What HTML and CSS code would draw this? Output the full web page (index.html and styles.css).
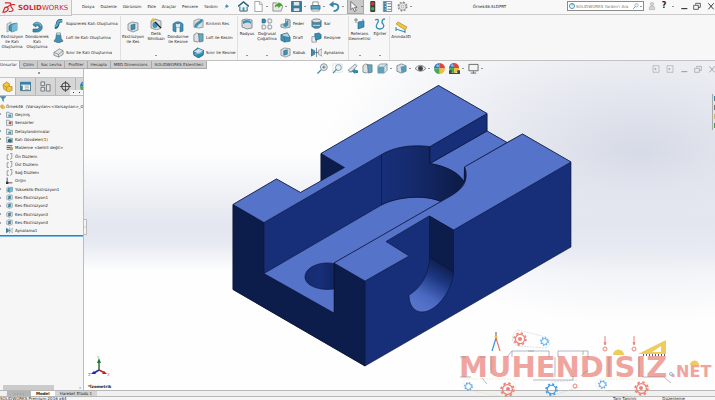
FILE: index.html
```html
<!DOCTYPE html>
<html lang="tr">
<head>
<meta charset="utf-8">
<title>SOLIDWORKS - Örnek46.SLDPRT</title>
<link rel="stylesheet" href="styles.css">
</head>
<body>
<svg class="defs" aria-hidden="true">
  <symbol id="i-extrude" viewBox="0 0 12 12"><path d="M1 3 5 1v8L1 11z" fill="#d9dcde" stroke="#78848c" stroke-width=".6"/><path d="M3 5 6 3l5-1v7l-5 2-3-2z" fill="#4595b8" stroke="#245c78" stroke-width=".6"/><path d="M6 4v7l5-2V2z" fill="#79bad4"/></symbol>
  <symbol id="i-revolve" viewBox="0 0 12 12"><path d="M2 4C3 1 7 0 10 3c3 4 0 8-4 8H2V8h4c2 0 3-2 1-3-1-1-2 0-2 1z" fill="#3e8fb4" stroke="#205873" stroke-width=".6"/><path d="M4 3c2-2 5-1 6 2" fill="none" stroke="#8cc8de"/></symbol>
  <symbol id="i-sweep" viewBox="0 0 12 12"><path d="M2 10c5 0 1-7 6-7h2" fill="none" stroke="#245f7d" stroke-width="4"/><path d="M2 9c5 0 1-6 6-6h2" fill="none" stroke="#59a8c8" stroke-width="2"/></symbol>
  <symbol id="i-loft" viewBox="0 0 12 12"><path d="M4 1h4l1 6 2 3-5 2-5-2 2-3z" fill="#4590b0" stroke="#355c6e" stroke-width=".6"/><path d="M4 1h4v2H4z" fill="#b6d7e2"/></symbol>
  <symbol id="i-box" viewBox="0 0 12 12"><path d="m1 6 6-4 4 2v4l-5 3-5-2z" fill="#e1e2e2" stroke="#737b80" stroke-width=".8"/><path d="m1 6 5 2 5-4M6 8v3" fill="none" stroke="#737b80" stroke-width=".7"/></symbol>
  <symbol id="i-cut" viewBox="0 0 12 12"><path d="m1 3 4-2 6 1v7l-5 2-5-2z" fill="#dcdfe1" stroke="#6f7980" stroke-width=".7"/><path d="m4 4 4-1v5L4 9z" fill="#3e91b5" stroke="#215a75" stroke-width=".5"/></symbol>
  <symbol id="i-hole" viewBox="0 0 12 12"><path d="m1 3 4-2 6 2v7l-4 2-6-2z" fill="#d5dadd" stroke="#6f7980" stroke-width=".7"/><ellipse cx="5" cy="7" rx="2.500" ry="3" fill="#3e91b5"/><path d="m5 4 6 6" stroke="#222" stroke-width="1.200"/><path d="M3 0v4M1 2h4" stroke="#f4b332" stroke-width="1.200"/></symbol>
  <symbol id="i-revcut" viewBox="0 0 12 12"><path d="M1 3c3-3 7-3 10 0v7l-3 1V6H4v5l-3-1z" fill="#4392b4" stroke="#276078" stroke-width=".6"/><path d="M4 3v3h4V3" fill="#d8e4e9"/></symbol>
  <symbol id="i-swcut" viewBox="0 0 12 12"><path d="M1 3 6 1l5 1v8l-5 1-5-1z" fill="#dadddf" stroke="#6f7980" stroke-width=".7"/><path d="M3 10c0-5 3-3 7-8" fill="none" stroke="#3d8fb3" stroke-width="3"/></symbol>
  <symbol id="i-bndcut" viewBox="0 0 12 12"><path d="m0 5 5-4 7 3-1 5-5 3-5-3z" fill="#2f8ab2" stroke="#205873" stroke-width=".7"/><path d="m1 5 5-3 5 2-5 3z" fill="#cfe2ea"/><path d="m2 8 8-2" stroke="#8cc8de"/></symbol>
  <symbol id="i-fillet" viewBox="0 0 12 12"><path d="m1 2 4-1 6 1v8l-5 1-5-2z" fill="#d6dadd" stroke="#606b72" stroke-width=".7"/><path d="M2 3c4-2 7-1 8 1v2C8 4 5 4 2 6z" fill="#3e91b5"/></symbol>
  <symbol id="i-pattern" viewBox="0 0 12 12"><path d="M1 1h3l1 2-1 2H1z" fill="#318db5" stroke="#205873" stroke-width=".5"/><path d="M7 1h3l1 2-1 2H7zM1 7h3l1 2-1 2H1zM7 7h3l1 2-1 2H7z" fill="#edf0f1" stroke="#707c83" stroke-width=".7"/></symbol>
  <symbol id="i-rib" viewBox="0 0 12 12"><path d="m1 7 5-1V1l5 1v8l-5 1-5-1z" fill="#c9d0d3" stroke="#63717a" stroke-width=".7"/><path d="m3 8 6-6v6l-3 2z" fill="#3f91b4"/></symbol>
  <symbol id="i-draft" viewBox="0 0 12 12"><path d="m1 3 7-2 3 5v4l-6 1-4-2z" fill="#3c93b9" stroke="#276077" stroke-width=".7"/><path d="m1 3 4 2 6 1-3-5zM5 5v6" fill="#b7d7e3" stroke="#276077" stroke-width=".5"/></symbol>
  <symbol id="i-wrap" viewBox="0 0 12 12"><path d="M1 3v6c2 3 8 3 10 0V3z" fill="#458cab" stroke="#5b6c75" stroke-width=".8"/><ellipse cx="6" cy="3" rx="5" ry="2" fill="#dce1e3" stroke="#5b6c75" stroke-width=".8"/><path d="M2 8h8" stroke="#d1e2e8"/></symbol>
  <symbol id="i-intersect" viewBox="0 0 12 12"><path d="M1 5h5v6H1z" fill="#eef0f1" stroke="#6f7980" stroke-width=".7"/><path d="m4 2 5-1 2 2v4L5 9z" fill="#368eb4" stroke="#225b75" stroke-width=".7"/></symbol>
  <symbol id="i-mirror" viewBox="0 0 12 12"><path d="m0 2 4 2v4l-4 2z" fill="#358fb6" stroke="#225b75" stroke-width=".6"/><path d="m12 2-4 2v4l4 2z" fill="#e2e5e7" stroke="#69767e" stroke-width=".6"/><path d="M6 1v10M4 6h4" stroke="#445660" stroke-width=".7"/></symbol>
  <symbol id="i-refgeo" viewBox="0 0 12 12"><path d="m4 4 6-1v6l-6 2z" fill="#3a91b7" stroke="#265e77" stroke-width=".6"/><path d="M2 0v5M0 2h4M9 1v2" stroke="#607078" stroke-width=".8"/></symbol>
  <symbol id="i-curve" viewBox="0 0 12 12"><path d="M1 2c4-2 4 1 2 4s0 5 3 5 5-3 3-5-1-5 2-5" fill="none" stroke="#2e8db6" stroke-width="1.300"/></symbol>
  <symbol id="i-instant" viewBox="0 0 12 12"><path d="m1 3 2-2 9 5-2 3z" fill="#f4c542" stroke="#a07c1b" stroke-width=".6"/><path d="m1 8 9 3M1 6v4M10 9v3" stroke="#3990b4" stroke-width="1.100"/></symbol>
  <symbol id="i-home" viewBox="0 0 12 12"><path d="M2 6v5h8V6" fill="#e7eef1" stroke="#316177"/><path d="m0 6 6-5 6 5" fill="none" stroke="#24617e" stroke-width="1.500"/><path d="M5 7h2v4H5z" fill="#3d8fb4"/></symbol>
  <symbol id="i-new" viewBox="0 0 12 12"><path d="M2 .5h5.500L10 3v8.500H2z" fill="#fff" stroke="#8a8a8a" stroke-width=".8"/><path d="M7 1v3h3" fill="#ddd" stroke="#8a8a8a" stroke-width=".6"/></symbol>
  <symbol id="i-open" viewBox="0 0 12 12"><path d="M1 11V2h4l1 1h4v2l2 0-2 6z" fill="#e8e8e4" stroke="#777" stroke-width=".8"/><path d="M3 7c0-3 2-4 4-4V1l4 3-4 4V6C5 6 4 6 3 7z" fill="#4aa32c"/></symbol>
  <symbol id="i-save" viewBox="0 0 12 12"><path d="M.5.500h11v11h-11z" fill="#387b9b" stroke="#244f65" stroke-width=".7"/><path d="M3 1h6v4H3zM3 8h6v3H3z" fill="#dde6ea"/></symbol>
  <symbol id="i-print" viewBox="0 0 12 12"><path d="M3 1h6v4H3z" fill="#fff" stroke="#666" stroke-width=".7"/><path d="M1 5h10v4H1z" fill="#57a4c4" stroke="#31586b" stroke-width=".7"/><path d="M2 9h8v2H2z" fill="#f4f4f4" stroke="#666" stroke-width=".6"/></symbol>
  <symbol id="i-undo" viewBox="0 0 12 12"><path d="M2 4c6-2 9 0 8 4-1 2-3 3-5 3" fill="none" stroke="#3586ab" stroke-width="2"/><path d="M0 4 5 0v7z" fill="#3586ab"/></symbol>
  <symbol id="i-arrow" viewBox="0 0 12 12"><path d="M3 .5v9L5.300 7.500 7 11.500l2-1L7 7h3z" fill="#f6f6f6" stroke="#444" stroke-width=".7"/></symbol>
  <symbol id="i-lights" viewBox="0 0 12 12"><rect x="3.500" width="5.500" height="12" rx="1" fill="#39413c"/><circle cx="6.200" cy="3" r="1.900" fill="#db362f"/><circle cx="6.200" cy="8.500" r="1.900" fill="#3dae45"/></symbol>
  <symbol id="i-list" viewBox="0 0 12 12"><path d="M1.500.500h9v11h-9z" fill="#fff" stroke="#536b77" stroke-width=".8"/><path d="M2 1h3v10H2z" fill="#3e809d"/><path d="M3 3h1M3 6h1M3 9h1" stroke="#fff"/><path d="M6 3h4M6 6h4M6 9h4" stroke="#62747e"/></symbol>
  <symbol id="i-props" viewBox="0 0 12 12"><path d="M.5 1.500h11v9H.5z" fill="#fff" stroke="#2f5f76" stroke-width=".9"/><path d="M0 1h12v3H0z" fill="#3583a6"/><path d="M2 5v5" stroke="#3583a6" stroke-width="2"/><path d="M5 5.500h5M5 7.500h5M5 9.500h5" stroke="#62747e" stroke-width=".7"/></symbol>
  <symbol id="i-gear" viewBox="0 0 12 12"><circle cx="6" cy="6" r="4.600" fill="none" stroke="#888" stroke-width="1.700" stroke-dasharray="2 1.600"/><circle cx="6" cy="6" r="3.700" fill="#f5f5f5" stroke="#888" stroke-width=".7"/><circle cx="6" cy="6" r="1.600" fill="none" stroke="#888" stroke-width=".7"/></symbol>
  <symbol id="i-pin" viewBox="0 0 12 12"><path d="m6 1 5 5-2 0-2 3-4-4 3-2zM4 8l-3 3" fill="#3b83a6" stroke="#3b83a6"/></symbol>
  <symbol id="i-user" viewBox="0 0 12 12"><circle cx="6" cy="3" r="2.500" fill="#d3d3d3" stroke="#999" stroke-width=".6"/><path d="M2 11.500V8q0-2 4-2t4 2v3.500z" fill="#d3d3d3" stroke="#999" stroke-width=".6"/></symbol>
  <symbol id="i-min" viewBox="0 0 12 12"><path d="M2 10h9" stroke="currentColor" stroke-width="1.500"/></symbol>
  <symbol id="i-restore" viewBox="0 0 12 12"><path d="M1 5h7v6H1zM4 4V2h7v6H8" fill="none" stroke="currentColor"/></symbol>
  <symbol id="i-close" viewBox="0 0 12 12"><path d="m2 2 8 9m0-9-8 9" stroke="currentColor" stroke-width="1.300"/></symbol>
  <symbol id="i-search" viewBox="0 0 12 12"><circle cx="7" cy="4.500" r="3.500" fill="#e8f3f8" stroke="#5c8ba1" stroke-width=".9"/><path d="m4.500 7.500-4 4" stroke="#496c7d" stroke-width="1.500"/></symbol>
  <symbol id="i-zoomfit" viewBox="0 0 12 12"><circle cx="7.500" cy="4.500" r="3.700" fill="#eef4f6" stroke="#6a7f89" stroke-width=".9"/><path d="m4.500 7.500-4 4" stroke="#4a86a3" stroke-width="1.500"/><path d="M5.500 4.500h4M7.500 2.500v4" stroke="#555" stroke-width=".8"/></symbol>
  <symbol id="i-zoomarea" viewBox="0 0 12 12"><path d="M1 1h10v9H1z" fill="none" stroke="#8aa" stroke-width=".6" stroke-dasharray="1 1"/><circle cx="7" cy="5" r="3.200" fill="#e8f3f8" stroke="#718b98" stroke-width=".9"/><path d="m5 7-4 4" stroke="#4a86a3" stroke-width="1.300"/></symbol>
  <symbol id="i-prev" viewBox="0 0 12 12"><path d="m1 8 8-7 2 2-6 7zM2 10l9-2" fill="#dce3e6" stroke="#718792" stroke-width=".8"/><path d="M5 9l4-3v2h3v3H9v1z" fill="#3289ad"/></symbol>
  <symbol id="i-section" viewBox="0 0 12 12"><path d="m1 3 3-2 3 1v7l-2 2-4-1z" fill="#e0e2e3" stroke="#58656c" stroke-width=".7"/><path d="M6 2h5v8l-4 1z" fill="#68a9c1" stroke="#476b79" stroke-width=".7"/></symbol>
  <symbol id="i-cube" viewBox="0 0 12 12"><path d="m1 3 3-2h7v7l-3 3H1z" fill="#d7e4ea" stroke="#637984" stroke-width=".7"/><path d="M1 4h7v7H1z" fill="#629fb8"/><path d="m8 4 3-3" stroke="#637984" stroke-width=".7"/></symbol>
  <symbol id="i-shaded" viewBox="0 0 12 12"><path d="m1 3 5-2 5 2v6l-5 2-5-2z" fill="#d9e0e3" stroke="#60737d" stroke-width=".8"/><path d="m5 4 6-1v6l-5 2z" fill="#529bb9"/></symbol>
  <symbol id="i-eye" viewBox="0 0 12 12"><path d="M0 6q6-7 12 0-6 6-12 0z" fill="#e8e8e8" stroke="#676767" stroke-width=".8"/><circle cx="6" cy="6" r="2.700" fill="#444"/></symbol>
  <symbol id="i-ball" viewBox="0 0 12 12"><path d="M6 6V0a6 6 0 0 0-6 6z" fill="#3475c3"/><path d="M6 6h6a6 6 0 0 0-6-6z" fill="#de463c"/><path d="M6 6v6a6 6 0 0 0 6-6z" fill="#e7c33d"/><path d="M6 6H0a6 6 0 0 0 6 6z" fill="#48a951"/><circle cx="4" cy="3" r="1.500" fill="#fff" opacity=".5"/></symbol>
  <symbol id="i-scene" viewBox="0 0 12 12"><use href="#i-ball" width="11" height="11"/><path d="M0 8h3v4H0zM9 8h3v4H9zM3 11h6v1H3z" fill="#42484a"/></symbol>
  <symbol id="i-monitor" viewBox="0 0 12 12"><path d="M1 1.500h10v7H1z" fill="#f3f3f3" stroke="#626262"/><path d="M6 9v2M3 11h6" stroke="#626262"/></symbol>
  <symbol id="i-pane" viewBox="0 0 12 12"><path d="M1.500 1v10h9V1z" fill="none" stroke="currentColor" stroke-width=".8"/><path d="m4 4 3 2-3 2z" fill="currentColor"/></symbol>
  <symbol id="i-part" viewBox="0 0 12 12"><path d="m1 4 4-3 3 2v3l3 0v4l-4 2-5-3z" fill="#f2c53d" stroke="#a37d18" stroke-width=".7"/><path d="m2 5 3 2v3m0-3 3-2" fill="none" stroke="#b48a1e" stroke-width=".8"/></symbol>
  <symbol id="i-config" viewBox="0 0 12 12"><path d="M1 1h4v4H1zM1 7h4v4H1zM7 4h4v7H7z" fill="#e1e3e4" stroke="#626b70" stroke-width=".9"/></symbol>
  <symbol id="i-target" viewBox="0 0 12 12"><circle cx="6" cy="6" r="4" fill="none" stroke="#333" stroke-width="1.100"/><path d="M6 0v12M0 6h12" stroke="#333" stroke-width=".8"/></symbol>
  <symbol id="i-filter" viewBox="0 0 12 12"><path d="M0 1h12L7 6v5L5 9V6z" fill="#418eb0" stroke="#295d75" stroke-width=".8"/></symbol>
  <symbol id="i-folder" viewBox="0 0 12 12"><path d="M1 10V2h4l1 2h5v7H1z" fill="#edf1f3" stroke="#596c76"/><path d="M4 6h5v4H4z" fill="#4898b9"/></symbol>
  <symbol id="i-solids" viewBox="0 0 12 12"><path d="M1 10V2h4l1 2h5v7H1z" fill="#edf1f3" stroke="#596c76"/><path d="m3 6 3-1 4 1v4l-3 1-4-1z" fill="#1f6d92"/></symbol>
  <symbol id="i-sensor" viewBox="0 0 12 12"><path d="M1 10V2h4l1 2h5v7H1z" fill="#edf1f3" stroke="#596c76"/><circle cx="7" cy="7" r="2.500" fill="#bf4945"/></symbol>
  <symbol id="i-material" viewBox="0 0 12 12"><path d="M1 3h10M1 6h6M1 9h5" stroke="#414b50" stroke-width="1.500"/><circle cx="9" cy="8" r="2.500" fill="#d8a34b" stroke="#444" stroke-width=".6"/></symbol>
  <symbol id="i-plane" viewBox="0 0 12 12"><path d="M2 3h3M7 1l3-1v9L7 11M5 11H2V3" fill="none" stroke="#6d777c" stroke-width="1.200"/></symbol>
  <symbol id="i-origin" viewBox="0 0 12 12"><path d="M2 1v9h9" fill="none" stroke="#333" stroke-width="1.400"/><path d="M0 8h4v4H0z" fill="#333"/></symbol>
  <symbol id="i-gearmark" viewBox="0 0 16 16"><circle cx="8" cy="8" r="6.800" fill="none" stroke="currentColor" stroke-width="1.800" stroke-dasharray="2.670 2.670"/><circle cx="8" cy="8" r="5.200" fill="none" stroke="currentColor" stroke-width="1.400"/></symbol>
</svg>

<div class="app">
  <header class="titlebar">
    <div class="brand">
      <svg class="brand-mark" viewBox="0 0 16 14"><path d="M3 2h5c3 0 1 4-5 5M3 7c6-1 4 5-2 5l2-5M14 4c-6-1-5 2-3 4s0 4-4 3" fill="none" stroke="#d52b2e" stroke-width="1.300"/></svg>
      <span><b>SOLID</b>WORKS</span>
    </div>
    <nav class="menu">
      <a href="#">Dosya</a><a href="#">Düzenle</a><a href="#">Görünüm</a><a href="#">Ekle</a><a href="#">Araçlar</a><a href="#">Pencere</a><a href="#">Yardım</a>
      <svg class="pin"><use href="#i-pin"/></svg>
    </nav>
    <div class="quick">
      <button aria-label="Giriş"><svg><use href="#i-home"/></svg></button>
      <button class="drop" aria-label="Yeni"><svg><use href="#i-new"/></svg></button>
      <button class="drop" aria-label="Aç"><svg><use href="#i-open"/></svg></button>
      <button class="drop" aria-label="Kaydet"><svg><use href="#i-save"/></svg></button>
      <button class="drop" aria-label="Yazdır"><svg><use href="#i-print"/></svg></button>
      <button class="drop" aria-label="Geri al"><svg><use href="#i-undo"/></svg></button>
      <button class="drop selected" aria-label="Seç"><svg><use href="#i-arrow"/></svg></button>
      <button aria-label="Yeniden oluştur"><svg><use href="#i-lights"/></svg></button>
      <button aria-label="Dosya özellikleri"><svg><use href="#i-list"/></svg></button>
      <button class="drop" aria-label="Seçenekler"><svg><use href="#i-gear"/></svg></button>
    </div>
    <span class="filename">Örnek46.SLDPRT</span>
    <label class="search"><span class="help-dot">?</span><input type="text" aria-label="Ara" placeholder="SOLIDWORKS Yardım'ı Ara"><svg><use href="#i-search"/></svg><i class="caret"></i></label>
    <div class="window">
      <button aria-label="Oturum"><svg class="user"><use href="#i-user"/></svg></button>
      <button class="help">?</button><i class="caret"></i>
      <button aria-label="Küçült"><svg><use href="#i-min"/></svg></button>
      <button aria-label="Geri yükle"><svg><use href="#i-restore"/></svg></button>
      <button aria-label="Kapat"><svg><use href="#i-close"/></svg></button>
    </div>
  </header>

  <section class="ribbon">
    <button class="big"><svg><use href="#i-extrude"/></svg>Ekstrüzyon<br>ile Katı<br>Oluşturma</button>
    <button class="big"><svg><use href="#i-revolve"/></svg>Döndürerek<br>Katı<br>Oluşturma</button>
    <div class="stack">
      <button><svg><use href="#i-sweep"/></svg>Süpürerek Katı Oluşturma</button>
      <button><svg><use href="#i-loft"/></svg>Loft ile Katı Oluşturma</button>
      <button><svg><use href="#i-box"/></svg>Sınır ile Katı Oluşturma</button>
    </div>
    <button class="big divided"><svg><use href="#i-cut"/></svg>Ekstrüzyon<br>ile Kes</button>
    <button class="big more"><svg><use href="#i-hole"/></svg>Delik<br>Sihirbazı<i class="caret"></i></button>
    <button class="big"><svg><use href="#i-revcut"/></svg>Döndürme<br>ile Kesme</button>
    <div class="stack">
      <button><svg><use href="#i-swcut"/></svg>Kırılımlı Kes</button>
      <button><svg><use href="#i-section"/></svg>Loft ile Kesim</button>
      <button><svg><use href="#i-bndcut"/></svg>Sınır ile Kesme</button>
    </div>
    <button class="big more divided"><svg><use href="#i-fillet"/></svg>Radyus<i class="caret"></i></button>
    <button class="big more"><svg><use href="#i-pattern"/></svg>Doğrusal<br>Çoğaltma<i class="caret"></i></button>
    <div class="stack">
      <button><svg><use href="#i-rib"/></svg>Feder</button>
      <button><svg><use href="#i-draft"/></svg>Draft</button>
      <button><svg><use href="#i-cut"/></svg>Kabuk</button>
    </div>
    <div class="stack">
      <button><svg><use href="#i-wrap"/></svg>Sar</button>
      <button><svg><use href="#i-intersect"/></svg>Kesişme</button>
      <button><svg><use href="#i-mirror"/></svg>Aynalama</button>
    </div>
    <button class="big more divided"><svg><use href="#i-refgeo"/></svg>Referans<br>Geometrisi<i class="caret"></i></button>
    <button class="big more"><svg><use href="#i-curve"/></svg>Eğriler<i class="caret"></i></button>
    <button class="big divided"><svg><use href="#i-instant"/></svg>Anında3D</button>
  </section>

  <main class="work">
    <nav class="tabs">
      <button class="active">Unsurlar</button><button>Çizim</button><button>Sac Levha</button><button>Profiller</button><button>Hesapla</button><button>MBD Dimensions</button><button>SOLIDWORKS Eklentileri</button>
    </nav>

    <aside class="panel">
      <div class="grip"></div>
      <div class="panel-tabs">
        <button class="active" aria-label="Unsur ağacı"><svg><use href="#i-part"/></svg></button>
        <button aria-label="Özellikler"><svg><use href="#i-props"/></svg></button>
        <button aria-label="Konfigürasyon"><svg><use href="#i-config"/></svg></button>
        <button aria-label="Ölçülendirme"><svg><use href="#i-target"/></svg></button>
        <button aria-label="Görüntü"><svg><use href="#i-ball"/></svg></button>
        <span class="pager"><i></i><i></i></span>
      </div>
      <svg class="filter"><use href="#i-filter"/></svg>
      <ul class="tree">
        <li class="root"><svg><use href="#i-part"/></svg>Örnek46&nbsp; (Varsayılan&lt;&lt;Varsayılan&gt;_Gö</li>
        <li class="node"><svg><use href="#i-folder"/></svg>Geçmiş</li>
        <li><svg><use href="#i-sensor"/></svg>Sensörler</li>
        <li class="node"><svg><use href="#i-folder"/></svg>Detaylandırmalar</li>
        <li class="node"><svg><use href="#i-solids"/></svg>Katı Gövdeler(1)</li>
        <li><svg><use href="#i-material"/></svg>Malzeme &lt;belirli değil&gt;</li>
        <li><svg><use href="#i-plane"/></svg>Ön Düzlem</li>
        <li><svg><use href="#i-plane"/></svg>Üst Düzlem</li>
        <li><svg><use href="#i-plane"/></svg>Sağ Düzlem</li>
        <li><svg><use href="#i-origin"/></svg>Orijin</li>
        <li class="node"><svg><use href="#i-extrude"/></svg>Yükseklik-Ekstrüzyon1</li>
        <li class="node"><svg><use href="#i-cut"/></svg>Kes-Ekstrüzyon1</li>
        <li class="node"><svg><use href="#i-cut"/></svg>Kes-Ekstrüzyon2</li>
        <li class="node"><svg><use href="#i-cut"/></svg>Kes-Ekstrüzyon3</li>
        <li class="node"><svg><use href="#i-cut"/></svg>Kes-Ekstrüzyon4</li>
        <li><svg><use href="#i-mirror"/></svg>Aynalama1</li>
      </ul>
      <div class="hscroll"><span></span><b>›</b></div>
      <span class="handle">›</span>
    </aside>

    <section class="viewport">
      <svg class="model" viewBox="84 61 631 329" preserveAspectRatio="xMidYMid meet" role="img" aria-label="Katı model">
        <defs>
          <linearGradient id="bore"><stop offset="0" stop-color="#172f78"/><stop offset=".35" stop-color="#152b6e"/><stop offset=".9" stop-color="#0d1d4b"/></linearGradient>
          <linearGradient id="hole"><stop offset="0" stop-color="#142b6e"/><stop offset=".5" stop-color="#172f78"/><stop offset="1" stop-color="#122663"/></linearGradient>
          <linearGradient id="slot" gradientUnits="userSpaceOnUse" x1="441" y1="264" x2="417" y2="304"><stop offset="0" stop-color="#0f2053"/><stop offset=".3" stop-color="#1b3580"/><stop offset=".75" stop-color="#4a68c0"/><stop offset="1" stop-color="#5673ca"/></linearGradient>
        </defs>
        <g class="solid">
          <path class="mid" d="M233 204.500 276.500 179 300.500 192.500 321 181V153.500L438.500 85.500 487 113.500V131L507 142.500 522.500 134 571 162V247L365 366 233 289.500z"/>
          <path class="dark" d="M233 204.500 264 222.500V273.500L334 313V263L365 281V366L233 289.500z"/>
          <path class="dark" d="M321 153.500 344.500 167.500 321 181z"/>
          <path class="light" d="M264 273.500 381.500 205C396 197 424 194 441 201.500L334 263V313z"/>
          <path class="light" d="M430 163.500 487 131 507 142.500 464.500 167V182C458 173 446 166 430 163.500z"/>
          <path fill="url(#bore)" d="M381.500 154.500C394 147 412 144 430 146.500V163.500C446 166 460 173 464 182 459 192 451 196 441 201.500 424 194 396 197 381.500 205z"/>
          <path class="mid" d="M430 146.500 487 113.500V131L430 163.500z"/>
          <path class="light" d="M233 204.500 276.500 179 300.500 192.500 344.500 167.500 321 153.500 438.500 85.500 487 113.500 430 146.500C412 144 394 147 381.500 154.500L264 222.500z"/>
          <path class="light" d="M334 263 441 201.500C459 192 466 186 466 176Q466 171 464.500 167L522.500 134 571 162 453.500 230 429 216 386 241.500 409 256 365 281z"/>
          <path class="dark" d="M464.500 167Q468 175 464 182z"/>
          <path class="dark" d="M429.500 216 453.500 230V272L429.500 257z"/>
          <path fill="url(#slot)" d="M429.500 257 453.500 272C453 289 437 312 422 312 414 312 409 305 409 295 420 289 430 273 429.500 257z"/>
          <path fill="url(#hole)" d="M334 263.500C320 261 305 267 305 277 305 286 320 291 334 289z"/>
        </g>
        <g class="triad">
          <path d="M99 370V361" stroke="#26762b"/><path d="m97 363 2-5 2 5z" fill="#26762b"/>
          <path d="m99 370-5 3" stroke="#2228b4"/><path d="m91 374 3-3 2 3z" fill="#2228b4"/>
          <path d="m99 370 6 3" stroke="#b6262a"/><path d="m107 374-5 0 2-3z" fill="#b6262a"/>
          <text x="97" y="359" fill="#62a565">Y</text><text x="88" y="376" fill="#5b5fd2">Z</text><text x="107" y="376" fill="#e05b5e">X</text>
        </g>
      </svg>
      <div class="view-tools">
        <button aria-label="Sığdır"><svg><use href="#i-zoomfit"/></svg></button>
        <button aria-label="Alana yakınlaştır"><svg><use href="#i-zoomarea"/></svg></button>
        <button aria-label="Önceki görünüm"><svg><use href="#i-prev"/></svg></button>
        <button aria-label="Kesit"><svg><use href="#i-section"/></svg></button>
        <button class="drop" aria-label="Yönlendirme"><svg><use href="#i-cube"/></svg></button>
        <button class="drop" aria-label="Görünüm stili"><svg><use href="#i-shaded"/></svg></button>
        <button class="drop" aria-label="Gizle / göster"><svg><use href="#i-eye"/></svg></button>
        <button aria-label="Görünümü düzenle"><svg><use href="#i-ball"/></svg></button>
        <button class="drop" aria-label="Sahne"><svg><use href="#i-scene"/></svg></button>
        <button class="drop" aria-label="Ekran ayarları"><svg><use href="#i-monitor"/></svg></button>
      </div>
      <div class="doc-window">
        <button aria-label="Sol bölme"><svg><use href="#i-pane"/></svg></button>
        <button aria-label="Sağ bölme"><svg><use href="#i-pane"/></svg></button>
        <button aria-label="Belgeyi küçült"><svg><use href="#i-min"/></svg></button>
        <button aria-label="Belgeyi geri yükle"><svg><use href="#i-restore"/></svg></button>
        <button aria-label="Belgeyi kapat"><svg><use href="#i-close"/></svg></button>
      </div>
      <div class="task-pane"><i class="blue"></i><i class="gray"></i><i class="tan"></i><i class="green"></i></div>
      <span class="view-name">*İzometrik</span>
    </section>
  </main>

  <nav class="sheets">
    <span class="nav-arrows">‹ ‹ › ›</span>
    <button class="active">Model</button><button>Hareket Etüdü 1</button>
  </nav>
  <footer class="status"><span>SOLIDWORKS Premium 2016 x64</span><span class="end">Tam Tanımlı</span><span>Düzenleme</span></footer>

  <svg class="watermark" viewBox="450 325 265 75" role="img" aria-label="MUHENDISIZ.NET">
    <g fill="none" stroke="#f1dfae" stroke-width=".6" stroke-dasharray="2 1"><path d="M468 379h40c12 4 10 16-3 18l-38-7c-6-3-6-9 1-11zM601 379h40c12 4 10 16-3 18l-38-7c-6-3-6-9 1-11z"/></g>
    <g fill="none" stroke="#c3c9d1" stroke-width=".6" stroke-dasharray="2 1"><path d="M518 330l28 7c5 3 5 9 0 11l-28-2c-8-3-7-13 0-16zM551 382l27-2M551 396l28-9"/></g>
    <text class="word" x="459" y="377">MUHENDISIZ</text>
    <text class="net" x="670" y="377">.NET</text>
    <g fill="none" stroke="#7f8a99" stroke-width=".6">
      <path d="M460 357h6M460 377h11M480 357h6M491 356v18M507 357l5-6h37v6M512 351v6M558 357v-6h30v7M533 380h40v-4M581 376l7-6M642 377h22l7 6M482 378l5 6M528 351h6M583 351v4M555 357v20M609 357v20M639 357v20"/>
    </g>
    <g fill="none" stroke-width="1.200"><path d="m496 338-4 13" stroke="#3c91dc"/><path d="m496 338 4 13" stroke="#ed7a70"/><path d="M496 332v8" stroke="#806b65"/></g>
    <circle cx="496" cy="337" r="1.500" fill="#f0c24a"/>
    <g color="#ee8178"><use href="#i-gearmark" x="513" y="332" width="14" height="14"/><use href="#i-gearmark" x="500" y="382" width="15" height="15"/><use href="#i-gearmark" x="634" y="381" width="15" height="15"/><circle cx="520" cy="339" r="2" fill="#ee8178"/><circle cx="508" cy="389" r="2" fill="#ee8178"/><circle cx="641" cy="388" r="2" fill="#ee8178"/></g>
    <g color="#3c9ae4"><use href="#i-gearmark" x="540" y="337" width="9" height="9"/><use href="#i-gearmark" x="464" y="382" width="9" height="9"/><use href="#i-gearmark" x="545" y="383" width="13" height="13"/><use href="#i-gearmark" x="598" y="380" width="9" height="9"/><circle cx="671" cy="374" r="1.500" fill="none" stroke="#8bbde6"/></g>
    <g fill="none" stroke="#ee8178"><path d="M605 336v8m-1-2 1 3 1-3M634 336v8m-1-2 1 3 1-3"/><circle cx="605" cy="349" r="2"/><circle cx="634" cy="349" r="2"/><circle cx="575" cy="386" r="2"/></g>
    <g fill="#f0cc5a"><path d="M613 355a5.500 5.500 0 0 1 11 0zM690 365a4.500 4.500 0 0 1 9 0z"/><path fill-rule="evenodd" d="M638 354 666 340V354zM652 352h9v-6z"/></g>
    <path d="M643 355h22" stroke="#56606c" stroke-width="2" stroke-dasharray="1 2"/>
  </svg>
</div>
</body>
</html>
```
FILE: styles.css
```css
*,
*::before,
*::after { box-sizing: border-box; }

body {
  margin: 0;
  font: 4px/5px "DejaVu Sans", sans-serif;
  color: #1c1c1c;
  background: #f6f6f6;
}

button {
  padding: 0;
  border: 0;
  background: none;
  font: inherit;
  color: inherit;
}

a { color: inherit; text-decoration: none; }
svg { display: block; flex: none; }
.defs { position: absolute; width: 0; height: 0; }

.app {
  position: relative;
  display: flex;
  flex-direction: column;
  height: 100vh;
  overflow: hidden;
}

.caret,
.drop::after {
  content: "";
  flex: none;
  border: 1px solid transparent;
  border-top-color: #333;
  border-bottom: 0;
}

/* Title bar */
.titlebar {
  display: flex;
  align-items: center;
  height: 15px;
  flex: none;
  padding-bottom: 2px;
  border-bottom: 1px solid #cacaca;
  background: #f8f8f8;
}

.brand {
  display: flex;
  align-items: center;
  align-self: flex-start;
  flex: none;
  gap: 1px;
  width: 72px;
  height: 16px;
  padding-left: 2px;
  border: 1px solid #c4c4c4;
  border-width: 0 1px 1px 0;
  background: #f0f0f0;
  color: #d52b2e;
  font-size: 7px;
  line-height: 8px;
  z-index: 1;
}
.brand-mark { width: 15px; height: 13px; }

.menu {
  display: flex;
  align-items: center;
  flex: none;
  gap: 6px;
  width: 160px;
  padding-left: 10px;
}
.pin { width: 5px; height: 5px; }

.quick {
  display: flex;
  align-items: center;
  flex: none;
  gap: 4px;
  height: 13px;
  padding-left: 6px;
}
.quick button { display: flex; align-items: center; gap: 2px; height: 13px; }
.quick svg { width: 11px; height: 11px; }
.quick .selected { background: #c9c9c9; outline: 1px solid #a8a8a8; }

.filename { flex: 1; text-align: center; }

.search {
  display: flex;
  align-items: center;
  flex: none;
  gap: 1px;
  width: 77px;
  height: 10px;
  padding: 0 1px;
  border: 1px solid #8c8c8c;
  background: #fff;
}
.search input {
  flex: 1;
  min-width: 0;
  padding: 0;
  border: 0;
  background: none;
  font: inherit;
}
.search input::placeholder { color: #777; }
.search svg { width: 6px; height: 6px; }
.help-dot {
  width: 6px;
  height: 6px;
  border: 1px solid #4e91ae;
  border-radius: 50%;
  color: #29708f;
  line-height: 4px;
  text-align: center;
}

.window {
  display: flex;
  align-items: center;
  justify-content: space-between;
  flex: none;
  width: 71px;
  padding-left: 4px;
}
.window svg { width: 8px; height: 8px; }
.window .user { height: 12px; }
.window .help { font-size: 8px; font-weight: bold; line-height: 10px; }

/* Ribbon */
.ribbon {
  display: grid;
  grid-template-columns: 24px 26px 70px 26px 20px 24px 47px 20px 20px 31px 40px 23px 18px 24px;
  flex: none;
  height: 46px;
  padding-top: 1px;
  border-bottom: 1px solid #c2c2c2;
  background: #f7f7f7;
}
.ribbon button { white-space: nowrap; }
.big {
  display: flex;
  flex-direction: column;
  align-items: center;
  min-width: 0;
  padding-top: 5px;
  text-align: center;
}
.big svg { width: 12px; height: 12px; margin-bottom: 1px; }
.big.more { padding-top: 2px; padding-bottom: 4px; }
.big .caret { margin-top: auto; }
.divided { box-shadow: inset 1px 0 #e0e0e0; }
.stack {
  display: flex;
  flex-direction: column;
  justify-content: space-around;
  padding-left: 3px;
}
.stack button { display: flex; align-items: center; gap: 2px; }
.stack svg { width: 11px; height: 11px; }

/* Work area */
.work {
  display: grid;
  grid-template: 8px 1fr / 84px 1fr;
  flex: 1;
  min-height: 0;
}

.tabs {
  grid-area: 1 / 1 / 2 / 3;
  justify-self: start;
  display: flex;
  z-index: 1;
}
.tabs button {
  padding: 0 3px;
  border: 1px solid #aaa;
  border-width: 0 1px 1px 0;
  background: #cdcdcd;
  color: #333;
  white-space: nowrap;
}
.tabs .active { padding: 0 2px 0 0; border-bottom-color: #f6f6f6; background: #f6f6f6; }

.panel {
  grid-area: 2 / 1;
  position: relative;
  display: flex;
  flex-direction: column;
  min-width: 0;
  border-right: 1px solid #bdbdbd;
  background: #f6f6f6;
}
.grip {
  height: 9px;
  border-bottom: 1px solid #c4c4c4;
  background: radial-gradient(circle at 39px 4px, #999 1px, transparent 1px);
}
.panel-tabs {
  position: relative;
  display: flex;
  height: 18px;
  flex: none;
  overflow: hidden;
  border-bottom: 1px solid #bbb;
}
.panel-tabs button {
  display: flex;
  align-items: center;
  justify-content: center;
  flex: none;
  width: 20px;
  border-right: 1px solid #b5b5b5;
  background: #d6d6d6;
}
.panel-tabs .active { width: 16px; background: #f6f6f6; }
.panel-tabs svg { width: 11px; height: 11px; }
.pager {
  position: absolute;
  right: 0;
  bottom: 0;
  display: flex;
  justify-content: space-around;
  align-items: center;
  width: 13px;
  height: 5px;
  background: #f4f4f4;
}
.pager i { width: 1px; height: 1px; background: #333; }
.filter { width: 6px; height: 6px; }

.tree {
  display: grid;
  grid-auto-rows: 1fr;
  flex: none;
  height: 134px;
  margin: 0;
  padding: 0;
  overflow: hidden;
  list-style: none;
  border-bottom: 1px solid #1f86cc;
  box-shadow: 0 1px #7cbbe6;
}
.tree li {
  display: flex;
  align-items: center;
  gap: 2px;
  padding-left: 6px;
  white-space: nowrap;
}
.tree svg { width: 7px; height: 7px; }
.tree .root { gap: 1px; padding-left: 0; }
.tree .root svg { width: 5px; }
.tree .node { padding-left: 0; }
.tree .node::before {
  content: "";
  width: 4px;
  border: 1px solid transparent;
  border-left-color: #555;
}

.hscroll {
  display: flex;
  align-items: center;
  justify-content: space-between;
  height: 6px;
  margin-top: auto;
  padding: 0 2px 0 3px;
}
.hscroll span { width: 51px; height: 5px; background: #cbcbcb; }
.handle {
  position: absolute;
  left: 83px;
  top: 150px;
  width: 4px;
  height: 16px;
  border: 1px solid #bbb;
  background: #f4f4f4;
  color: #777;
  line-height: 13px;
  z-index: 1;
}

.viewport {
  grid-area: 1 / 2 / 3 / 3;
  position: relative;
  min-width: 0;
  min-height: 0;
  background:
    linear-gradient(transparent 28%, #e3e6ef 50%, #e6e9f1 55%, transparent 64%),
    radial-gradient(ellipse 50% 52% at 88% 28%, #d6dae6, transparent),
    #fefefe;
}
.model { width: 100%; height: 100%; }
.solid path { stroke: #0b1330; stroke-width: .6; stroke-linejoin: round; }
.light { fill: #5673ca; }
.mid { fill: #172f78; }
.dark { fill: #0d1d4b; }
.triad { stroke-width: 1.5; font-size: 4px; }

.view-tools,
.doc-window {
  position: absolute;
  top: 2px;
  display: flex;
  align-items: center;
  gap: 4px;
}
.view-tools { left: 37%; }
.view-tools button { display: flex; align-items: center; gap: 2px; }
.view-tools svg { width: 11px; height: 11px; }
.doc-window { right: -1px; gap: 6px; top: 4px; color: #999; }
.doc-window svg { width: 8px; height: 8px; }
.task-pane {
  position: absolute;
  right: 0;
  top: 33px;
  display: flex;
  flex-direction: column;
  justify-content: space-around;
  width: 3px;
  height: 36px;
  padding-left: 1px;
  border-left: 1px solid #aaa;
  background: #e2e2e2;
}
.task-pane i { height: 5px; }
.task-pane .blue { background: #3b83a6; }
.task-pane .gray { background: #777; }
.task-pane .tan { background: #c9b67c; }
.task-pane .green { background: #3f9a55; }
.view-name {
  position: absolute;
  left: 4px;
  bottom: 1px;
  font-weight: bold;
}

/* Bottom bars */
.sheets {
  display: flex;
  flex: none;
  height: 7px;
  padding-left: 7px;
  border: 1px solid #b8b8b8;
  border-width: 1px 0;
  background: #f0f0f0;
}
.sheets button { padding: 0 5px; background: #d4d4d4; line-height: 5px; }
.sheets .active { background: #fff; font-weight: bold; }
.nav-arrows { width: 24px; background: #b4b4b4; color: #777; text-align: center; }
.status {
  display: flex;
  flex: none;
  gap: 26px;
  height: 3px;
  padding-right: 30px;
  overflow: hidden;
  line-height: 4px;
}
.status .end { margin-left: auto; }

.watermark {
  position: absolute;
  right: 0;
  bottom: 0;
  width: 265px;
  height: 75px;
  pointer-events: none;
}
.watermark text { fill: #f0a49e; font-weight: bold; }
.word { font-size: 29px; }
.net { font-size: 16px; }
```
